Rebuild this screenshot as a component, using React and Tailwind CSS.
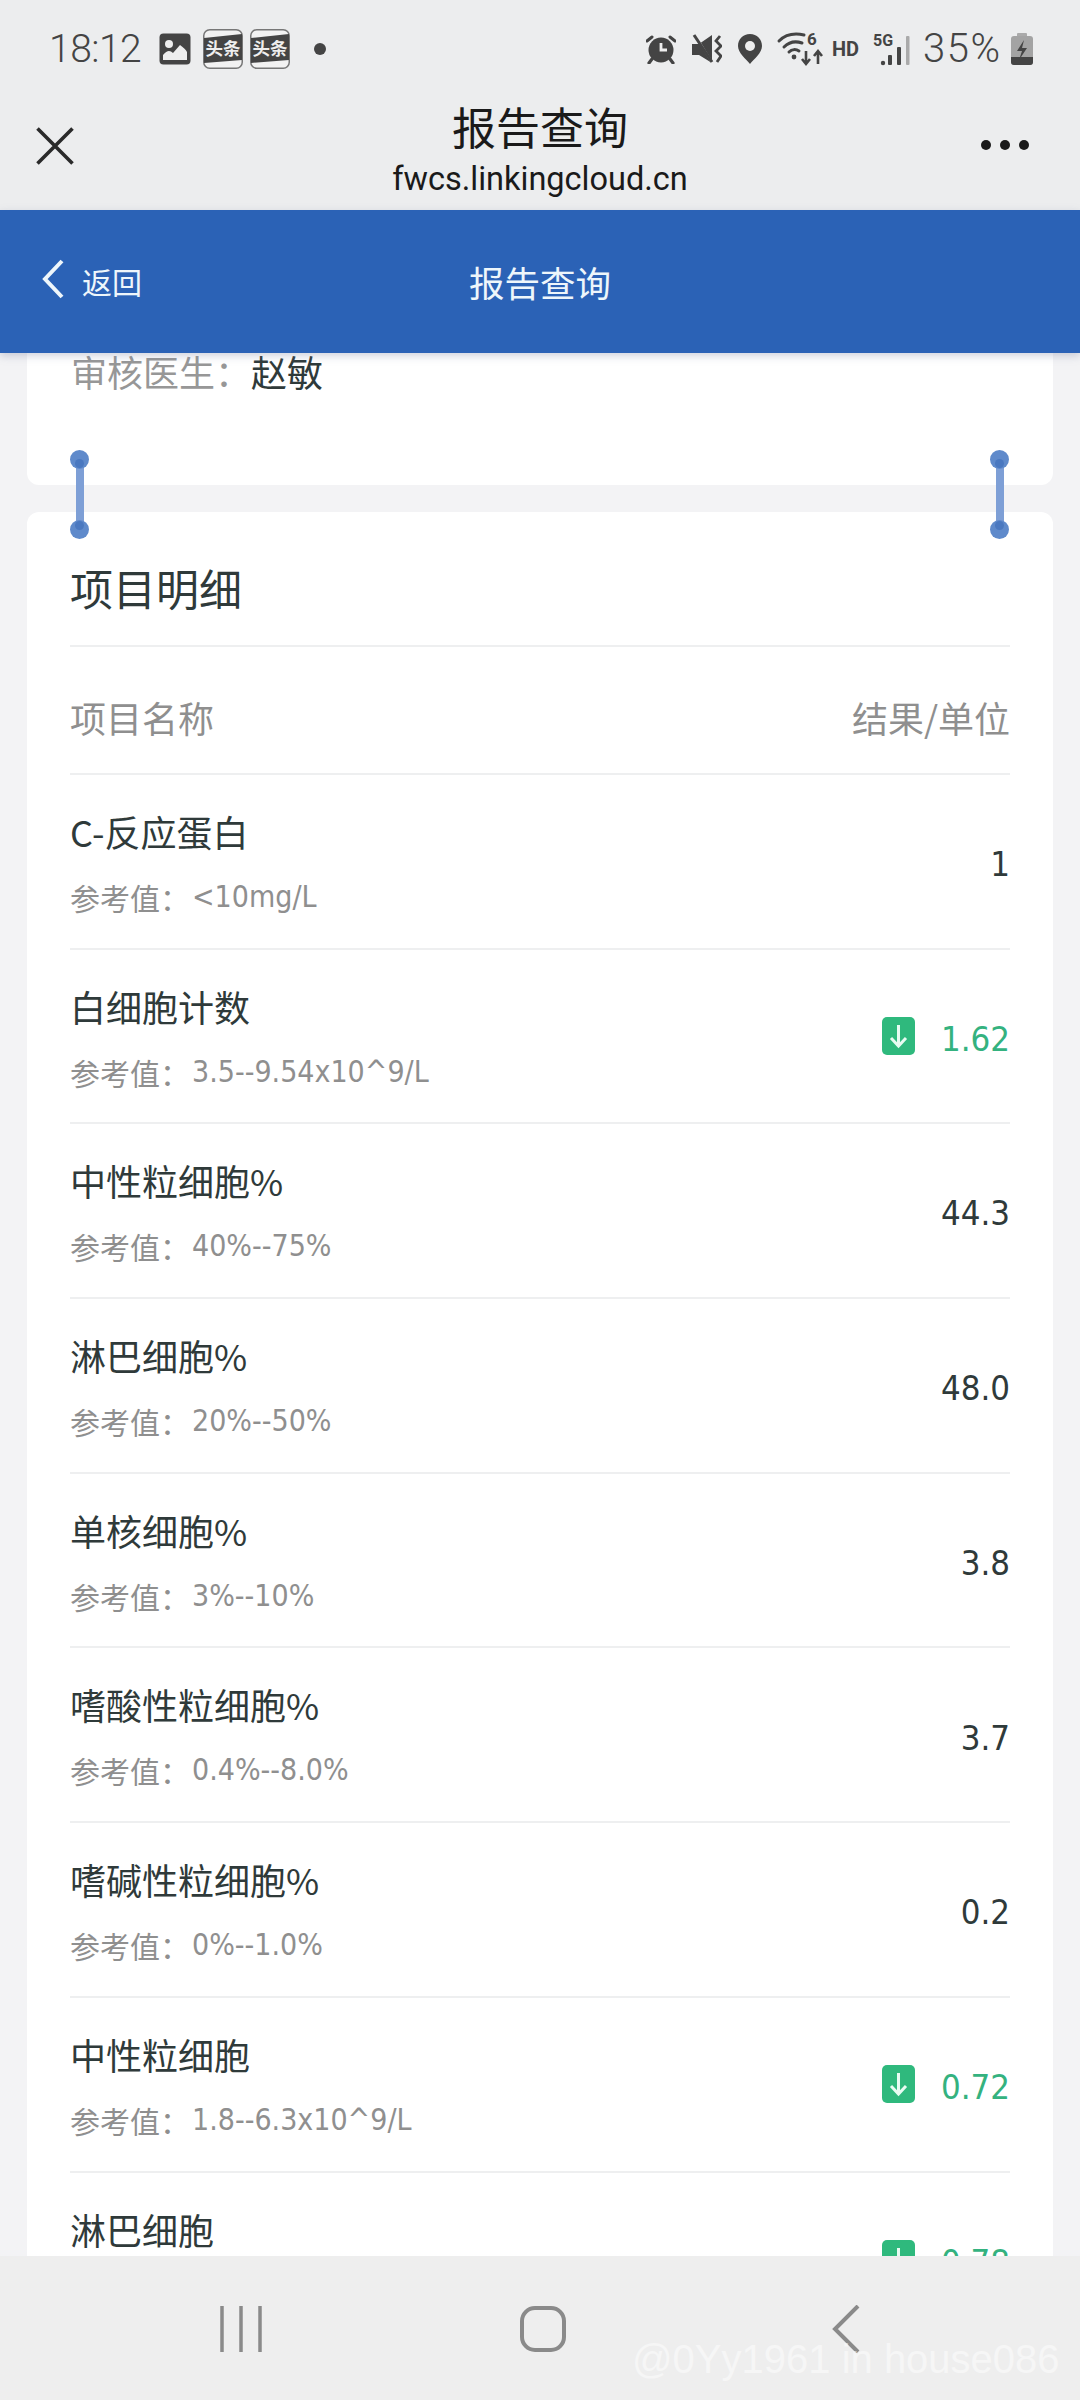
import React from 'react';

const rows = [
    { name: 'C-反应蛋白', ref: '<10mg/L', value: '1' },
    { name: '白细胞计数', ref: '3.5--9.54x10^9/L', value: '1.62', low: true },
    { name: '中性粒细胞%', ref: '40%--75%', value: '44.3' },
    { name: '淋巴细胞%', ref: '20%--50%', value: '48.0' },
    { name: '单核细胞%', ref: '3%--10%', value: '3.8' },
    { name: '嗜酸性粒细胞%', ref: '0.4%--8.0%', value: '3.7' },
    { name: '嗜碱性粒细胞%', ref: '0%--1.0%', value: '0.2' },
    { name: '中性粒细胞', ref: '1.8--6.3x10^9/L', value: '0.72', low: true },
    { name: '淋巴细胞', ref: '0.8--4x10^9/L', value: '0.78', low: true },
];

function ToutiaoTile() {
    return (
        <svg width="40" height="40" viewBox="0 0 40 40" className="shrink-0 overflow-visible">
            <rect x="0.75" y="0.75" width="38.5" height="38.5" rx="6" fill="#f2f2f2" stroke="#777" strokeWidth="1.5" />
            <path d="M1 9 L39 5 L39 31 L1 34 Z" fill="#444" />
            <text x="20" y="26" textAnchor="middle" fontSize="17.5" fontWeight="700" fill="#eee" fontFamily="'Noto Sans CJK SC', sans-serif">头条</text>
        </svg>
    );
}

function StatusBar() {
    return (
        <div className="h-[98px] flex items-center justify-between pl-[49px] pr-[47px] text-[#444]">
            <div className="flex items-center">
                <span className="text-[39px] leading-none font-['Roboto',sans-serif] font-light tracking-[-0.5px] w-[110px]">18:12</span>
                <svg width="32" height="32" viewBox="0 0 32 32" className="shrink-0">
                    <rect x="0.5" y="0.5" width="31" height="31" rx="4" fill="#444" />
                    <circle cx="10" cy="11" r="4" fill="#eee" />
                    <path d="M4 27 V22 C8 17 11 17 14 20 L21 12 C24 14 27 17 28 19 V27 Z" fill="#eee" />
                </svg>
                <div className="flex gap-[7px] ml-[12px]">
                    <ToutiaoTile />
                    <ToutiaoTile />
                </div>
                <span className="ml-[24px] w-[12px] h-[12px] rounded-full bg-[#444]"></span>
            </div>
            <div className="flex items-center">
                {/* alarm */}
                <svg width="30" height="30" viewBox="0 0 30 30" className="shrink-0">
                    <circle cx="15" cy="16" r="12.5" fill="#444" />
                    <path d="M15 9 V16 H21" stroke="#eee" strokeWidth="2.8" fill="none" />
                    <path d="M1 7 L6 3 M29 7 L24 3" stroke="#444" strokeWidth="3" strokeLinecap="round" />
                    <path d="M6 25 L3 29 M24 25 L27 29" stroke="#444" strokeWidth="3.2" strokeLinecap="round" />
                </svg>
                {/* mute + vibrate */}
                <svg width="30" height="30" viewBox="0 0 30 30" className="ml-[16px] shrink-0">
                    <path d="M0 10 H7 L20 1 V29 L7 21 H0 Z" fill="#444" />
                    <path d="M3 1 L21 30" stroke="#ececec" strokeWidth="2" />
                    <path d="M2 1 L20 28" stroke="#444" strokeWidth="3" />
                    <path d="M28 2 L24 7 L29 12 L24 17 L29 22 L25 28" stroke="#444" strokeWidth="2.8" fill="none" />
                </svg>
                {/* location pin */}
                <svg width="24" height="30" viewBox="0 0 24 30" className="ml-[16px] shrink-0">
                    <path d="M12 0 C5 0 0 5 0 12 C0 19 8 25 12 30 C16 25 24 19 24 12 C24 5 19 0 12 0 Z" fill="#444" />
                    <circle cx="12" cy="12" r="5" fill="#eee" />
                </svg>
                {/* wifi */}
                <svg width="46" height="34" viewBox="0 0 46 34" className="ml-[16px] shrink-0 overflow-visible">
                    <path d="M1 9 C8 2 17 1 26 3 M6 15 C11 10 18 9 24 11 M11 20 C14 17 18 17 21 19" stroke="#444" strokeWidth="3" fill="none" strokeLinecap="round" />
                    <circle cx="16" cy="25" r="2.4" fill="#444" />
                    <text x="29" y="13" fontSize="17" fontWeight="700" fill="#444" fontFamily="'Roboto', sans-serif">6</text>
                    <path d="M28 19 V31 M24 27 L28 32 L32 27 M40 32 V20 M36 24 L40 19 L44 24" stroke="#444" strokeWidth="2.6" fill="none" />
                </svg>
                <span className="ml-[8px] text-[20px] leading-none font-bold font-['Roboto',sans-serif] w-[41px]">HD</span>
                {/* 5G signal */}
                <svg width="37" height="34" viewBox="0 0 37 34" className="shrink-0 overflow-visible">
                    <text x="0" y="14" fontSize="16" fontWeight="700" fill="#444" fontFamily="'Roboto', sans-serif">5G</text>
                    <circle cx="10" cy="31" r="2.2" fill="#444" />
                    <rect x="15" y="23" width="4" height="10" rx="1" fill="#444" />
                    <rect x="24" y="15" width="4" height="18" rx="1" fill="#444" />
                    <rect x="33" y="4" width="3.5" height="29" rx="1" fill="#aaa" />
                </svg>
                <span className="ml-[13px] text-[40px] leading-none font-['Roboto',sans-serif] font-light tracking-[1.5px] w-[88px] whitespace-nowrap">35%</span>
                {/* battery */}
                <svg width="22" height="32" viewBox="0 0 22 32" className="shrink-0">
                    <rect x="6" y="0" width="10" height="4" rx="1" fill="#aaa" />
                    <rect x="0" y="3" width="22" height="29" rx="3" fill="#a3a3a3" />
                    <path d="M0 24 H22 V29 A3 3 0 0 1 19 32 H3 A3 3 0 0 1 0 29 Z" fill="#444" />
                    <path d="M13 7 L6 18 H11 L8 27 L16 15 H11 Z" fill="#444" />
                </svg>
            </div>
        </div>
    );
}

function TitleBar() {
    return (
        <div className="h-[112px] flex items-start">
            <div className="flex-1 pl-[36px] pr-[15px]">
                <svg width="38" height="38" viewBox="0 0 38 38" className="mt-[29px]">
                    <path d="M1.5 1.5 L36.5 36.5 M36.5 1.5 L1.5 36.5" stroke="#2a2a2a" strokeWidth="3.6" />
                </svg>
            </div>
            <div className="flex flex-col items-center text-[#1a1a1a]">
                <span className="text-[44px] leading-[58px] -mt-[1px] font-['Noto_Sans_CJK_SC',sans-serif]">报告查询</span>
                <span className="text-[32.5px] leading-[36px] mt-[6px] font-['Roboto',sans-serif]">fwcs.linkingcloud.cn</span>
            </div>
            <div className="flex-1 flex justify-end pr-[51px]">
                <div className="flex gap-[9px] mt-[42px]">
                    <span className="w-[10px] h-[10px] rounded-full bg-[#1a1a1a]"></span>
                    <span className="w-[10px] h-[10px] rounded-full bg-[#1a1a1a]"></span>
                    <span className="w-[10px] h-[10px] rounded-full bg-[#1a1a1a]"></span>
                </div>
            </div>
        </div>
    );
}

function BlueHeader() {
    return (
        <div className="relative z-10 h-[143px] bg-[#2b62b6] flex items-center text-[#eef6fb] font-['Noto_Sans_CJK_SC',sans-serif] shadow-[0_3px_8px_rgba(120,130,160,0.35)]">
            <div className="flex-1 flex items-center pl-[41px]">
                <svg width="24" height="40" viewBox="0 0 24 40" className="shrink-0 mb-[5px]">
                    <path d="M21 2 L4 20 L21 38" stroke="#eef6fb" strokeWidth="4" fill="none" />
                </svg>
                <span className="ml-[17px] text-[30px] leading-none -mt-[2px]">返回</span>
            </div>
            <span className="text-[35.5px] leading-none">报告查询</span>
            <div className="flex-1 pl-[41px]"></div>
        </div>
    );
}

// selection handle that floats over the two cards
function Handle({ className }) {
    return (
        <div className={`absolute top-[97px] w-[19px] h-[89px] ${className}`}>
            <div className="absolute left-[6px] top-[8px] w-[8px] h-[72px] bg-[#7e9fd6]"></div>
            <div className="absolute left-0 top-0 w-[19px] h-[19px] rounded-full bg-[#5f8acb]"></div>
            <div className="absolute left-0 bottom-0 w-[19px] h-[19px] rounded-full bg-[#5f8acb]"></div>
            <div className="absolute left-[5px] top-[9px] w-[9px] h-[9px] rounded-full bg-[#4a78c0]"></div>
            <div className="absolute left-[5px] bottom-[9px] w-[9px] h-[9px] rounded-full bg-[#4a78c0]"></div>
        </div>
    );
}

function ItemRow({ item }) {
    return (
        <div className="h-[174.7px] border-t-2 border-[#eeeff0] flex justify-between items-center">
            <div className="self-start pt-[34px]">
                <div className="text-[36px] leading-[44px] text-[#2f3a3a]">{item.name}</div>
                <div className="mt-[24px] text-[30px] leading-[40px] text-[#8f8f8f] flex">
                    <span>参考值：</span>
                    <span className="font-['DejaVu_Sans_Condensed','DejaVu_Sans',sans-serif] ml-[2px]">{item.ref}</span>
                </div>
            </div>
            <div className="flex items-center pt-[6px]">
                {item.low && (
                    <svg width="33" height="38" viewBox="0 0 33 38" className="shrink-0 mr-[26px] mb-[6px]">
                        <rect width="33" height="38" rx="5" fill="#2fb97d" />
                        <path d="M16.5 8 V28 M9 21 L16.5 29 L24 21" stroke="#e8fbf2" strokeWidth="3" fill="none" />
                    </svg>
                )}
                <span className={`text-[34.5px] leading-none font-['DejaVu_Sans_Condensed','DejaVu_Sans',sans-serif] ${item.low ? 'text-[#34b27f]' : 'text-[#2f3a3a]'}`}>
                    {item.value}
                </span>
            </div>
        </div>
    );
}

function Content() {
    return (
        <div className="relative flex-1 min-h-0 overflow-hidden bg-[#f3f3f5] px-[27px] font-['Noto_Sans_CJK_SC',sans-serif]">
            <div className="h-[132px] bg-white rounded-b-[12px] px-[44px] text-[36px] leading-[36px]">
                <span className="text-[#979797]">审核医生：</span>
                <span className="text-[#2f3a3a]">赵敏</span>
            </div>
            <div className="mt-[27px] bg-white rounded-t-[12px] px-[43px]">
                <div className="h-[133px] pt-[49px] text-[43px] leading-[52px] text-[#2f3a3a]">项目明细</div>
                <div className="h-[128px] pt-[14px] border-t-2 border-[#eeeff0] flex items-center justify-between text-[36px] text-[#8f8f8f]">
                    <span>项目名称</span>
                    <span>结果/单位</span>
                </div>
                {rows.map((item) => (
                    <ItemRow key={item.name} item={item} />
                ))}
            </div>
            <Handle className="left-[70px]" />
            <Handle className="left-[990px]" />
        </div>
    );
}

function BottomNav() {
    return (
        <div className="relative h-[144px] bg-[#eeeeee] flex items-start">
            <div className="w-[360px] pl-[220px] pt-[50px]">
                <svg width="42" height="46" viewBox="0 0 42 46">
                    <path d="M2 0 V46 M21 0 V46 M40 0 V46" stroke="#8a8a8a" strokeWidth="3.5" />
                </svg>
            </div>
            <div className="w-[360px] pl-[160px] pt-[50px]">
                <svg width="46" height="46" viewBox="0 0 46 46">
                    <rect x="2" y="2" width="42" height="42" rx="13" fill="none" stroke="#8a8a8a" strokeWidth="4" />
                </svg>
            </div>
            <div className="pt-[49px] pl-[112px]">
                <svg width="28" height="48" viewBox="0 0 28 48">
                    <path d="M26 1 L3 24 L26 47" stroke="#8a8a8a" strokeWidth="4" fill="none" />
                </svg>
            </div>
            {/* watermark */}
            <span className="absolute left-[632px] top-[78px] text-[40px] leading-[50px] text-white/50 font-['Liberation_Sans',sans-serif] whitespace-nowrap">
                @0Yy1961 in house086
            </span>
        </div>
    );
}

export default function App() {
    return (
        <div className="w-[1080px] h-[2400px] flex flex-col overflow-hidden bg-[#ecedee]">
            <StatusBar />
            <TitleBar />
            <BlueHeader />
            <Content />
            <BottomNav />
        </div>
    );
}
